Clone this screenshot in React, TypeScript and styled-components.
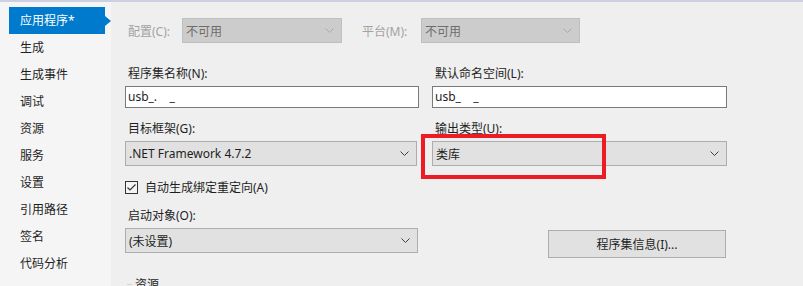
import React from 'react';
import styled, { createGlobalStyle, css } from 'styled-components';

const GlobalStyle = createGlobalStyle`
  html, body {
    margin: 0;
    padding: 0;
    background: #efefef;
  }
  body {
    font-family: "Noto Sans", "Noto Sans CJK SC", sans-serif;
    font-size: 12px;
    color: #1e1e1e;
  }
`;

const Window = styled.div`
  width: 803px;
  height: 286px;
  overflow: hidden;
  display: flex;
  flex-direction: column;
  background: #efefef;
`;

const TopStrip = styled.div`
  height: 2px;
  background: #ccd0e0;
  flex: none;
`;

const Body = styled.div`
  flex: 1;
  display: flex;
  min-height: 0;
`;

const Sidebar = styled.nav`
  width: 111px;
  flex: none;
  background: #f5f5f5;
  padding-top: 5px;
  box-sizing: border-box;
`;

const NavItem = styled.div<{ active?: boolean }>`
  position: relative;
  height: 27px;
  line-height: 27px;
  margin-left: 9px;
  width: 96px;
  padding-left: 11px;
  box-sizing: border-box;
  font-size: 12px;
  color: #1e1e1e;

  ${props =>
    props.active &&
    css`
      background: #007acc;
      color: #ffffff;

      &::after {
        content: '';
        position: absolute;
        right: -6px;
        top: 9px;
        border-left: 6px solid #007acc;
        border-top: 5px solid transparent;
        border-bottom: 5px solid transparent;
      }
    `}
`;

const Main = styled.main`
  flex: 1;
  padding-left: 14px;
  display: flex;
  flex-direction: column;
`;

const ConfigRow = styled.div`
  display: flex;
  align-items: center;
  margin-top: 16px;
  height: 25px;
`;

const ConfigLabel = styled.span<{ width: number }>`
  width: ${props => props.width}px;
  padding-left: 3px;
  box-sizing: border-box;
  color: #a2a2a2;
`;

const Separator = styled.div`
  height: 1px;
  background: #a0a0a0;
  margin-top: 16px;
  margin-left: 1px;
`;

const FormGrid = styled.div`
  display: grid;
  grid-template-columns: 294px 295px;
  column-gap: 13px;
  margin-top: 7px;
`;

const Field = styled.div<{ gapTop?: number }>`
  display: flex;
  flex-direction: column;
  margin-top: ${props => props.gapTop || 0}px;
`;

const Label = styled.label`
  height: 16px;
  line-height: 16px;
  padding-left: 3px;
  margin-bottom: 4px;
`;

const TextBox = styled.div`
  height: 22px;
  box-sizing: border-box;
  border: 1px solid #7a7a7a;
  background: #ffffff;
  padding-left: 2px;
  line-height: 20px;
  white-space: pre;
`;

const SelectBox = styled.div<{ disabled?: boolean; width?: number; inset?: number }>`
  position: relative;
  height: 25px;
  width: ${props => (props.width ? `${props.width}px` : 'auto')};
  margin-right: ${props => props.inset || 0}px;
  box-sizing: border-box;
  border: 1px solid #adadad;
  background: #e1e1e1;
  display: flex;
  align-items: center;
  justify-content: space-between;
  padding: 0 7px 0 3px;
  color: #1e1e1e;

  ${props =>
    props.disabled &&
    css`
      background: #cccccc;
      border-color: #bfbfbf;
      color: #6d6d6d;
    `}
`;

const Chevron = ({ color }: { color: string }) => (
  <svg width="9" height="5" viewBox="0 0 9 5">
    <path d="M0.5 0.5 L4.5 4.5 L8.5 0.5" fill="none" stroke={color} strokeWidth="1" />
  </svg>
);

const Highlight = styled.div`
  position: absolute;
  left: -11px;
  top: -7px;
  width: 185px;
  height: 45px;
  box-sizing: border-box;
  border: 4px solid #ed1c24;
  pointer-events: none;
`;

const SelectWrap = styled.div`
  position: relative;
`;

const CheckRow = styled.div`
  grid-column: 1 / 3;
  display: flex;
  align-items: center;
  height: 16px;
  margin-top: 13px;
  gap: 7px;
`;

const CheckBox = styled.span`
  width: 13px;
  height: 13px;
  box-sizing: border-box;
  border: 1px solid #333333;
  background: #f4f4f4;
  display: flex;
  align-items: center;
  justify-content: center;
`;

const ButtonCell = styled.div`
  display: flex;
  align-items: flex-end;
  padding-left: 116px;
`;

const Button = styled.button`
  width: 178px;
  height: 28px;
  margin-bottom: -5px;
  border: 1px solid #adadad;
  background: #e1e1e1;
  font-family: "Noto Sans", "Noto Sans CJK SC", sans-serif;
  font-size: 12px;
  color: #1e1e1e;
  padding: 0;
`;

const GroupHeader = styled.div`
  display: flex;
  align-items: center;
  margin-top: 22px;
  margin-left: 2px;
  gap: 3px;

  &::before {
    content: '';
    width: 5px;
    height: 1px;
    background: #d5d5d5;
  }
`;

const navItems = ['应用程序*', '生成', '生成事件', '调试', '资源', '服务', '设置', '引用路径', '签名', '代码分析'];

export default function App() {
  return (
    <Window>
      <GlobalStyle />
      <TopStrip />
      <Body>
        <Sidebar>
          {navItems.map((item, i) => (
            <NavItem key={item} active={i === 0}>
              {item}
            </NavItem>
          ))}
        </Sidebar>
        <Main>
          <ConfigRow>
            <ConfigLabel width={57}>配置(C):</ConfigLabel>
            <SelectBox disabled width={160}>
              <span>不可用</span>
              <Chevron color="#a8a8a8" />
            </SelectBox>
            <ConfigLabel width={79} style={{ paddingLeft: 20 }}>
              平台(M):
            </ConfigLabel>
            <SelectBox disabled width={159}>
              <span>不可用</span>
              <Chevron color="#a8a8a8" />
            </SelectBox>
          </ConfigRow>
          <Separator />
          <FormGrid>
            <Field>
              <Label>程序集名称(N):</Label>
              <TextBox>{'usb_.    _'}</TextBox>
            </Field>
            <Field>
              <Label>默认命名空间(L):</Label>
              <TextBox>{'usb_    _'}</TextBox>
            </Field>

            <Field gapTop={13}>
              <Label>目标框架(G):</Label>
              <SelectBox inset={2}>
                <span>.NET Framework 4.7.2</span>
                <Chevron color="#404040" />
              </SelectBox>
            </Field>
            <Field gapTop={13}>
              <Label>输出类型(U):</Label>
              <SelectWrap>
                <SelectBox>
                  <span>类库</span>
                  <Chevron color="#404040" />
                </SelectBox>
                <Highlight />
              </SelectWrap>
            </Field>

            <CheckRow>
              <CheckBox>
                <svg width="11" height="11" viewBox="0 0 11 11">
                  <path d="M1.5 5.5 L4 8 L9.5 2.5" fill="none" stroke="#333" strokeWidth="1.2" />
                </svg>
              </CheckBox>
              <span>自动生成绑定重定向(A)</span>
            </CheckRow>

            <Field gapTop={13}>
              <Label>启动对象(O):</Label>
              <SelectBox inset={1}>
                <span>(未设置)</span>
                <Chevron color="#404040" />
              </SelectBox>
            </Field>
            <ButtonCell>
              <Button>程序集信息(I)...</Button>
            </ButtonCell>
          </FormGrid>
          <GroupHeader>资源</GroupHeader>
        </Main>
      </Body>
    </Window>
  );
}
